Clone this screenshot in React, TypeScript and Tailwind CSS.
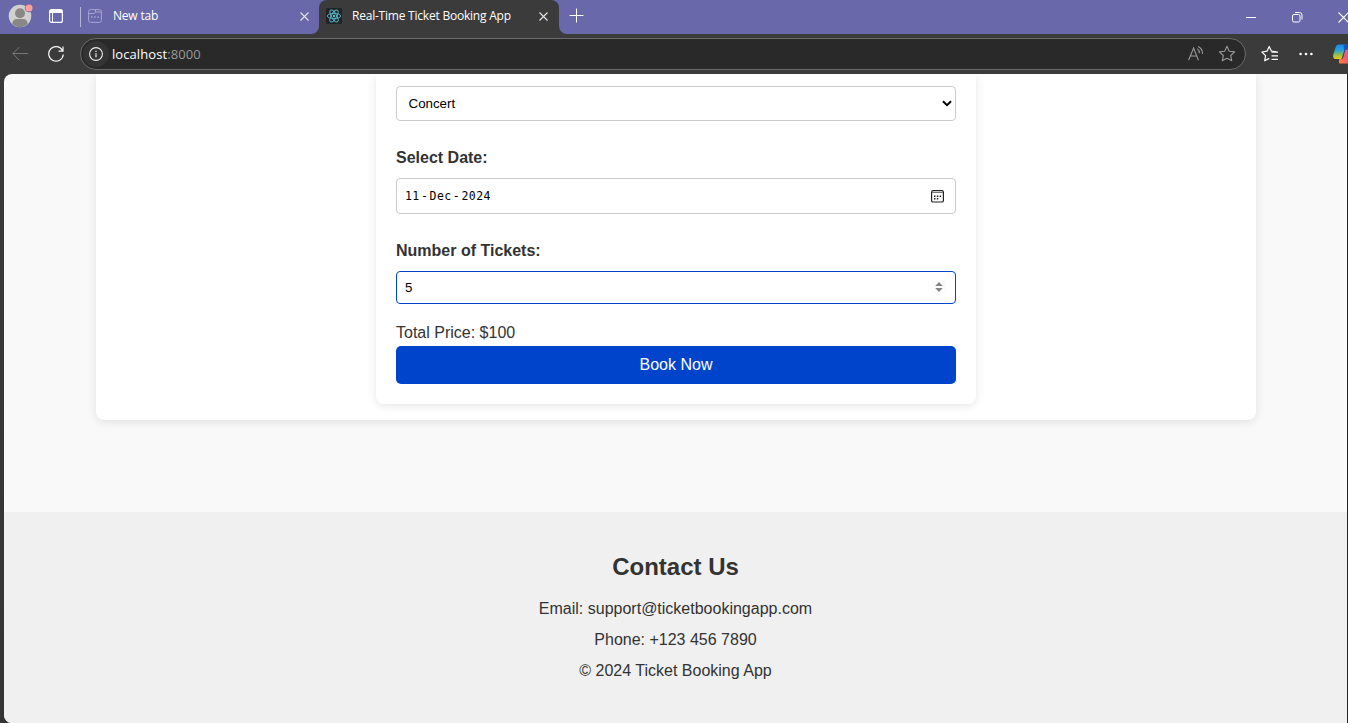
import React from "react";

const Close = ({ className = "" }: { className?: string }) => (
  <svg width="9" height="9" viewBox="0 0 9 9" className={className} fill="none" stroke="currentColor" strokeWidth="1.1">
    <path d="M0.5 0.5l8 8M8.5 0.5l-8 8" />
  </svg>
);

function TitleBar() {
  return (
    <div className="flex h-[34px] shrink-0 overflow-hidden bg-[#6868ab] text-white">
      <svg width="25" height="24" viewBox="0 0 25 24" className="ml-2 mt-1 shrink-0 overflow-visible">
        <circle cx="12" cy="12" r="11.3" fill="#d2d0ce" />
        <circle cx="12" cy="9.2" r="5" fill="#8a8886" />
        <path d="M4.3 20c.2-3.500 2-5 4.400-5h6.600c2.400 0 4.200 1.500 4.400 5a11 11 0 0 1-15.400 0z" fill="#8a8886" />
        <circle cx="21" cy="4" r="4.300" fill="#6868ab" />
        <circle cx="21" cy="4" r="3.600" fill="#ff9f98" />
      </svg>
      <svg width="14" height="14" viewBox="0 0 14 14" className="ml-4 mt-[9px] shrink-0" fill="none" stroke="#fff">
        <rect x=".6" y=".6" width="12.800" height="12.800" rx="2" strokeWidth="1.200" />
        <path d="M1 1h12v3H1z" fill="#fff" stroke="none" />
        <path d="M3.500 4v9.500" strokeWidth="1" />
      </svg>
      <div className="ml-[17px] mt-[7px] h-5 w-px shrink-0 bg-[#b4b4d8]" />
      <div className="flex h-8 w-[230px] shrink-0 items-center pl-[7px] pr-0.5">
        <svg width="14" height="14" viewBox="0 0 14 14" className="shrink-0" fill="none" stroke="#a5a5cf">
          <rect x=".6" y=".6" width="12.800" height="12.800" rx="2" />
          <path d="M.6 4.500h5.400c1 0 1-1 1.500-1.500h6" />
          <path d="M7.500 .6v2.400" />
          <path d="M3 8h1.500M6.200 8h1.500M9.400 8h1.500" strokeWidth="1.500" />
        </svg>
        <span className="ml-[11px] flex-1 whitespace-nowrap font-['Open_Sans',sans-serif] text-[12px] tracking-[-0.2px]">New tab</span>
        <Close className="mt-px text-[#e4e4f2]" />
      </div>
      <div className="flex h-[34px] w-2 shrink-0 bg-[#3b3b3b]">
        <div className="w-2 rounded-br-lg bg-[#6868ab]" />
      </div>
      <div className="flex w-60 shrink-0 items-center rounded-t-lg bg-[#3b3b3b] pb-0.5 pl-[7px] pr-[11px]">
        <svg width="16" height="16" viewBox="0 0 16 16" className="shrink-0" fill="none" stroke="#58b6cf" strokeWidth=".9">
          <rect width="16" height="16" rx="1.500" fill="#222325" stroke="none" />
          <ellipse cx="8" cy="8" rx="6.700" ry="2.600" />
          <ellipse cx="8" cy="8" rx="6.700" ry="2.600" transform="rotate(60 8 8)" />
          <ellipse cx="8" cy="8" rx="6.700" ry="2.600" transform="rotate(120 8 8)" />
          <circle cx="8" cy="8" r="1.200" fill="#58c4dc" stroke="none" />
        </svg>
        <span className="ml-2.5 flex-1 whitespace-nowrap font-['Open_Sans',sans-serif] text-[12px] tracking-[-0.220px]">Real-Time Ticket Booking App</span>
        <Close className="mt-px text-[#e6e6e6]" />
      </div>
      <div className="flex w-2 shrink-0 bg-[#3b3b3b]">
        <div className="w-2 rounded-bl-lg bg-[#6868ab]" />
      </div>
      <svg width="15" height="15" viewBox="0 0 15 15" className="ml-0.5 mt-2 shrink-0" fill="none" stroke="#fff">
        <path d="M7.500 .5v14M.5 7.500h14" />
      </svg>
      <div className="flex-1" />
      <svg width="10" height="2" viewBox="0 0 10 2" className="mt-[17px] shrink-0">
        <path d="M0 0h10v1H0z" fill="#fff" />
      </svg>
      <svg width="11" height="11" viewBox="0 0 11 11" className="ml-[36px] mt-3 shrink-0" fill="none" stroke="#fff">
        <rect x=".5" y="2.500" width="7.500" height="7.500" rx="1.500" />
        <path d="M3 .5h4.500a2.500 2.500 0 0 1 2.500 2.500v4.500" />
      </svg>
      <svg width="10" height="11" viewBox="0 0 10 11" className="ml-[35px] mt-[12px] shrink-0" fill="none" stroke="#fff" strokeWidth="1.100">
        <path d="M.5 .5l10 10M10.500 .5l-10 10" />
      </svg>
    </div>
  );
}

const star = "M8 1.200l2.050 4.300 4.700.6-3.450 3.250.9 4.700L8 11.750 3.800 14.050l.9-4.700L1.250 6.100l4.700-.6z";

function ToolBar() {
  return (
    <div className="flex h-10 shrink-0 items-center overflow-hidden bg-[#3b3b3b]">
      <svg width="16" height="14" viewBox="0 0 16 14" className="ml-3 shrink-0" fill="none" stroke="#777">
        <path d="M16 6.500H.8M7.500 0L.8 6.500l6.700 7" />
      </svg>
      <svg width="17" height="17" viewBox="0 0 17 17" className="ml-5 shrink-0" fill="none" stroke="#f5f5f5" strokeWidth="1.200">
        <path d="M14.600 4.700A7.300 7.300 0 1 0 15.300 8.500M15 .6v4.500h-4.500" />
      </svg>
      <div className="ml-[15px] flex h-8 w-[1166px] shrink-0 items-center rounded-full border border-[#6b6b6b] bg-[#292929] pl-0.5 pr-[9px]">
        <div className="flex size-[26px] items-center justify-center rounded-full bg-[#343434]">
          <svg width="14" height="14" viewBox="0 0 14 14" fill="none" stroke="#eee">
            <circle cx="7" cy="7" r="6.400" strokeWidth="1.100" />
            <path d="M7 6.300v4M7 3.800v1.300" strokeWidth="1.200" />
          </svg>
        </div>
        <span className="ml-[3px] flex-1 pt-[2px] font-['Open_Sans',sans-serif] text-[13px] tracking-[0.080px] text-white">
          localhost<span className="text-[#9a9a9a]">:8000</span>
        </span>
        <svg width="16" height="15" viewBox="0 0 16 15" className="-translate-y-px" fill="none" stroke="#999" strokeWidth="1.100">
          <path d="M.6 14.200L5.600 2l4.800 12.200M2.200 10h6.700M9.300 2.600q2.300 1.800 2 4.600M10.200 .6q4.600 2.600 4.300 7.400" />
        </svg>
        <svg width="18" height="18" viewBox="0 0 16 16" className="ml-[14px]" fill="none" stroke="#999" strokeWidth="1" strokeLinejoin="round">
          <path d={star} />
        </svg>
      </div>
      <svg width="18" height="18" viewBox="0 0 18 18" className="ml-[15px] shrink-0" fill="none" stroke="#fff" strokeWidth="1.200" strokeLinejoin="round">
        <path d="M15.500 6.800L10.500 6.200 8.200 1.500 6 6.200.9 7l3.700 3.600-.9 5.200 4.500-2.400M10.500 7.200h6.500M10.500 10.800h6.500M10.500 14.400h6.500" />
      </svg>
      <svg width="14" height="4" viewBox="0 0 14 4" className="ml-5 shrink-0" fill="#fff">
        <circle cx="1.600" cy="2" r="1.300" />
        <circle cx="7" cy="2" r="1.300" />
        <circle cx="12.400" cy="2" r="1.300" />
      </svg>
      <svg width="15" height="20" viewBox="0 0 15 20" className="ml-5 shrink-0">
        <defs>
          <linearGradient id="blue" x1="0" y1="0" x2="0" y2="1">
            <stop offset="0" stopColor="#168bf0" />
            <stop offset=".4" stopColor="#28a3d8" />
            <stop offset=".7" stopColor="#8cc04d" />
            <stop offset="1" stopColor="#f6cb19" />
          </linearGradient>
          <linearGradient id="warm" x1="0" y1="1" x2="1" y2="0">
            <stop offset="0" stopColor="#ff8a36" />
            <stop offset=".5" stopColor="#f45a64" />
            <stop offset="1" stopColor="#c35ee0" />
          </linearGradient>
        </defs>
        <path d="M6.500 19.500c-1-1-.6-3-.2-4.500l3.500-.5L12 7l1-1.500h3v14H8c-.8 0-1 0-1.500 0z" fill="url(#warm)" />
        <path d="M6 .500h7.500c1.500 0 2 .9 2.500 2.500l.3 2h-2.800c-1.400 0-2 .8-2.400 2L9 13.500c-.5 1.200-1 1.500-2.500 1.500H2.500C.2 15-.2 12.500.3 10.500L2.700 3.200C3.300 1.500 4.200.5 6 .5z" fill="url(#blue)" />
        <path d="M10.500 .500h3c1.500 0 2 .9 2.500 2.500l.3 2h-2.800c-1.400 0-2 .8-2.400 2z" fill="#1752c5" />
      </svg>
    </div>
  );
}

function BookingForm() {
  return (
    <div className="flex h-[330px] w-[600px] flex-col rounded-b-lg bg-white px-5 pt-3 shadow-[0_2px_10px_rgba(0,0,0,0.1)]">
      <div className="flex h-[35px] shrink-0 items-center justify-between rounded border border-[#ccc] pl-[11.500px] pr-[3px] text-[13.333px] text-black">
        <span>Concert</span>
        <svg width="10" height="7" viewBox="0 0 10 7" fill="none" stroke="#000" strokeWidth="2">
          <path d="M1 1.200l4 4 4-4" />
        </svg>
      </div>
      <div className="mt-7 h-[18px] text-[16px] font-bold leading-[18px]">Select Date:</div>
      <div className="mt-[11px] flex h-9 shrink-0 items-center justify-between rounded border border-[#ccc] pl-2 pr-[11px] text-black">
        <span className="flex gap-[1.300px] pt-0.5 font-['DejaVu_Sans_Mono','Liberation_Mono',monospace] text-[11.500px] tracking-[0.400px]">
          <span>11</span><span>-</span><span>Dec</span><span>-</span><span>2024</span>
        </span>
        <svg width="13" height="13" viewBox="0 0 13 13" fill="none" stroke="#222">
          <rect x=".6" y=".6" width="11.800" height="11.400" rx="1.600" strokeWidth="1.200" />
          <path d="M1 2.500h11" stroke="#777" strokeWidth="1" />
          <path d="M3 6.300h1.500M5.800 6.300h1.500M8.600 6.300h1.500M3 8.800h1.500M5.800 8.800h1.500" strokeWidth="1.500" />
        </svg>
      </div>
      <div className="mt-7 h-[18px] text-[16px] font-bold leading-[18px]">Number of Tickets:</div>
      <div className="mt-[11px] flex h-[33px] shrink-0 items-center justify-between rounded border border-[#0044cc] pl-2 pr-[9px] text-[13.333px] text-black">
        <span>5</span>
        <span className="mb-px flex h-[14px] w-[14px] items-center justify-center bg-[#fcfcfc]">
          <svg width="8" height="10" viewBox="0 0 8 10" fill="#858585">
            <path d="M4 0l3.800 4H.2zM4 10l3.800-4H.2z" />
          </svg>
        </span>
      </div>
      <div className="mt-5 h-[18px] text-[16px] leading-[18px]">Total Price: $100</div>
      <button className="mt-1 h-[38px] shrink-0 rounded-[5px] bg-[#0044cc] text-[16px] text-white">Book Now</button>
    </div>
  );
}

export default function App() {
  return (
    <div className="flex h-[723px] w-[1348px] flex-col overflow-hidden bg-[#3b3b3b]">
      <TitleBar />
      <ToolBar />
      <div className="flex min-h-0 flex-1 bg-gradient-to-b from-[#3b3b3b] to-[#363432] pl-1">
        <div className="flex w-[1343px] flex-col overflow-hidden rounded-l-lg bg-[#f9f9f9] font-['Liberation_Sans',Arial,sans-serif] text-[#333]">
          <main className="ml-[92px] flex h-[346px] w-[1160px] shrink-0 justify-center rounded-b-lg bg-white shadow-[0_2px_10px_rgba(0,0,0,0.1)]">
            <BookingForm />
          </main>
          <footer className="mt-[92px] flex-1 bg-[#f0f0f0] text-center">
            <h2 className="mt-[41px] text-[24px] font-bold leading-[28px]">Contact Us</h2>
            <p className="mt-[19px] text-[16px] leading-[18px]">Email: support@ticketbookingapp.com</p>
            <p className="mt-[13px] text-[16px] leading-[18px]">Phone: +123 456 7890</p>
            <p className="mt-[13px] text-[16px] leading-[18px]">© 2024 Ticket Booking App</p>
          </footer>
        </div>
        <div className="w-px bg-[#242424]" />
      </div>
    </div>
  );
}
